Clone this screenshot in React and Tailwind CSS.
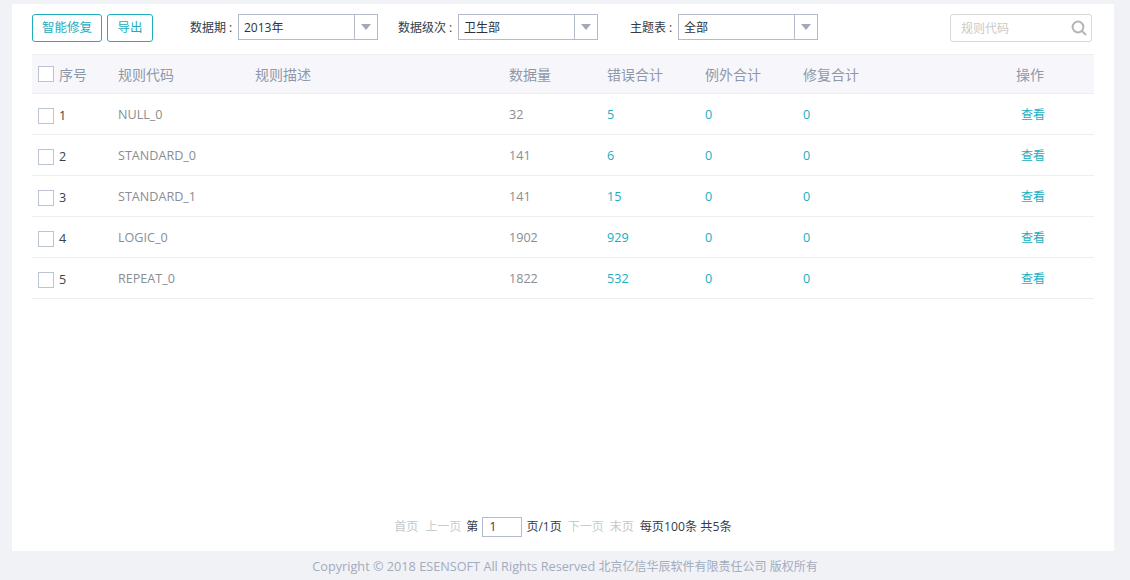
import React from "react";

const font = { fontFamily: '"Open Sans", "Noto Sans CJK SC", sans-serif' };
const rows = [
  ["1", "NULL_0", "32", "5"],
  ["2", "STANDARD_0", "141", "6"],
  ["3", "STANDARD_1", "141", "15"],
  ["4", "LOGIC_0", "1902", "929"],
  ["5", "REPEAT_0", "1822", "532"],
];
const grid = "grid grid-cols-[86px_137px_254px_98px_98px_98px_213px_1fr] items-center";

function Sel({ label, value, labelW, w, ml }) {
  return (
    <div className={`flex items-center h-[26px] text-[12px] text-[#333b4a] ${ml}`}>
      <span className={`${labelW} whitespace-nowrap pt-[1px]`}>{label}<span className="ml-[3px]">:</span></span>
      <div className={`flex h-[26px] ${w} border border-[#b4bbcb] bg-white`}>
        <span className="flex-1 pl-[5px] leading-[25px] text-[#2c3240]">{value}</span>
        <span className="w-[23px] border-l border-[#b4bbcb] flex items-center justify-center">
          <span className="w-0 h-0 border-x-[5px] border-x-transparent border-t-[6px] border-t-[#a3a9ba]" />
        </span>
      </div>
    </div>
  );
}

function Box() {
  return <span className="block w-[16px] h-[16px] border border-[#bcc3d3] bg-white shrink-0" />;
}

export default function App() {
  return (
    <div style={font} className="w-[1130px] h-[580px] bg-[#f0f2f6] pt-[4px] overflow-hidden flex flex-col">
      <div className="ml-[12px] w-[1102px] h-[547px] bg-white flex flex-col px-[20px] pt-[10px]">
        <div className="flex items-start h-[28px]">
          <button className="w-[70px] h-[28px] border border-[#20aebf] rounded-[3px] text-[12.5px] pt-[1px] text-[#20aebf]">智能修复</button>
          <button className="ml-[5px] w-[46px] h-[28px] border border-[#20aebf] rounded-[3px] text-[12.5px] pt-[1px] text-[#20aebf]">导出</button>
          <Sel label="数据期" value="2013年" labelW="w-[48px]" w="w-[140px]" ml="ml-[37px]" />
          <Sel label="数据级次" value="卫生部" labelW="w-[60px]" w="w-[140px]" ml="ml-[20px]" />
          <Sel label="主题表" value="全部" labelW="w-[48px]" w="w-[140px]" ml="ml-[32px]" />
          <div className="ml-auto mr-[2px] w-[142px] h-[28px] border border-[#d8d8d8] rounded-[3px] flex items-center pl-[10px] pr-[4px]">
            <span className="flex-1 text-[12px] pt-[1px] text-[#c9c9c9]">规则代码</span>
            <svg width="16" height="16" viewBox="0 0 16 16" fill="none" stroke="#b5b5b5" strokeWidth="2">
              <circle cx="7" cy="7" r="5.4" />
              <path d="M11 11l4 4" />
            </svg>
          </div>
        </div>

        <div className={`${grid} mt-[12px] h-[40px] bg-[#f7f7fb] border-y border-[#eceef2] text-[14px] text-[#8f98a8]`}>
          <div className="flex items-center gap-[5px] pl-[6px]"><Box /><span>序号</span></div>
          <span>规则代码</span>
          <span>规则描述</span>
          <span>数据量</span>
          <span>错误合计</span>
          <span>例外合计</span>
          <span>修复合计</span>
          <span>操作</span>
        </div>

        {rows.map((r) => (
          <div key={r[0]} className={`${grid} h-[41px] pt-[2px] border-b border-[#eceef2] text-[12.6px] text-[#8a8d94]`}>
            <div className="flex items-center gap-[5px] pl-[6px] pt-[2px]">
              <Box />
              <span className="text-[#3c3f47]">{r[0]}</span>
            </div>
            <span>{r[1]}</span>
            <span />
            <span>{r[2]}</span>
            <span className="text-[#20aebf]">{r[3]}</span>
            <span className="text-[#20aebf]">0</span>
            <span className="text-[#20aebf]">0</span>
            <span className="pl-[5px] text-[12px] text-[#20aebf]">查看</span>
          </div>
        ))}

        <div className="mt-auto mb-[14px] flex items-center justify-center h-[20px] text-[12px] text-[#333b4a] whitespace-pre">
          <span className="text-[#c3c8cc]">首页</span>
          <span className="ml-[7px] text-[#c3cfcf]">上一页</span>
          <span className="ml-[5px]">第</span>
          <span className="ml-[4px] w-[40px] h-[20px] border border-[#b4bbcb] pl-[6px] leading-[18px]">1</span>
          <span className="ml-[4px]">页/1页</span>
          <span className="ml-[6px] text-[#c3cfcf]">下一页</span>
          <span className="ml-[6px] text-[#c3c8cc]">末页</span>
          <span className="ml-[6px] text-[12.2px]">每页100条 共5条</span>
        </div>
      </div>
      <div className="h-[29px] pt-[3px] flex items-center justify-center text-[12px] text-[#a3abbd] whitespace-pre">
        <span className="text-[12.7px]">Copyright © 2018 ESENSOFT All Rights Reserved </span>北京亿信华辰软件有限责任公司 版权所有
      </div>
    </div>
  );
}
